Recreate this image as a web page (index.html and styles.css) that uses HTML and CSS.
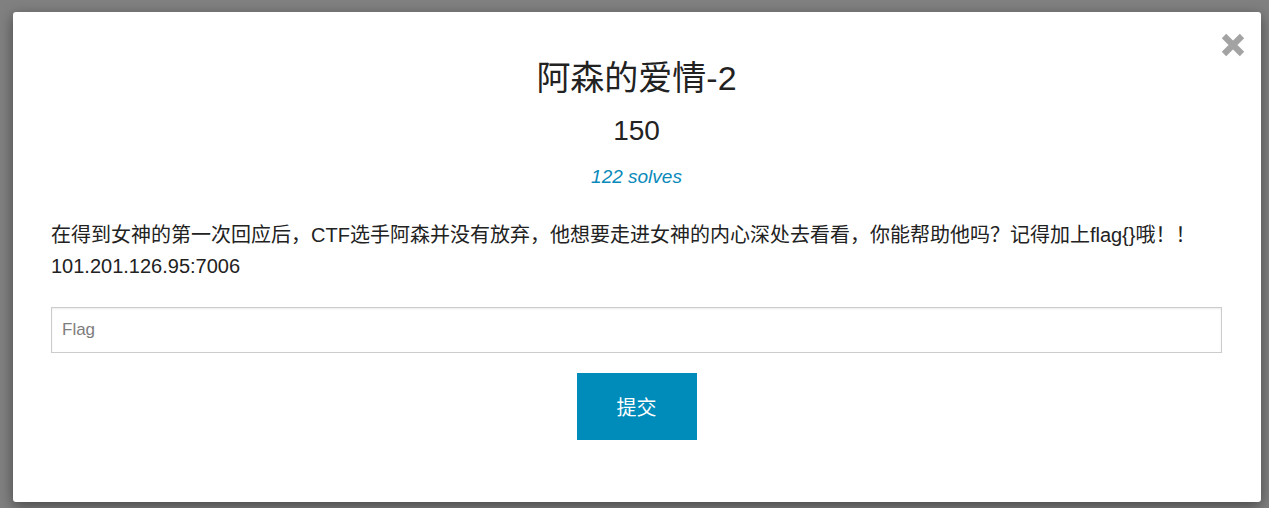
FILE: index.html
```html
<!DOCTYPE html>
<html lang="zh-CN">
<head>
<meta charset="utf-8">
<title>阿森的爱情-2</title>
<link rel="stylesheet" href="styles.css">
</head>
<body>
<div class="modal">
  <button class="close" type="button" aria-label="Close">
    <svg width="24" height="24" viewBox="0 0 24 24"><path d="M3 3 L21 21 M21 3 L3 21" stroke="#a3a3a3" stroke-width="6.2" fill="none"/></svg>
  </button>
  <h2 class="chal-name">阿森的爱情-2</h2>
  <h3 class="chal-value">150</h3>
  <p class="chal-solves">122 solves</p>
  <p class="chal-desc">在得到女神的第一次回应后，CTF选手阿森并没有放弃，他想要走进女神的内心深处去看看，你能帮助他吗？记得加上flag{}哦！！<br>101.201.126.95:7006</p>
  <input class="flag-input" type="text" placeholder="Flag">
  <div class="submit-row"><button class="submit" type="button">提交</button></div>
</div>
</body>
</html>
```
FILE: styles.css
```css
html, body {
  margin: 0;
  padding: 0;
  background: #808080;
  height: 100%;
  overflow: hidden;
}
body {
  padding: 12px 8px 0 13px;
  box-sizing: border-box;
  font-family: "Liberation Sans", "Noto Sans CJK SC", sans-serif;
  color: #333;
}
.modal {
  position: relative;
  background: #fff;
  border-radius: 3px;
  box-shadow: 0 4px 14px rgba(0, 0, 0, 0.45);
  padding: 47px 39px 62px 38px;
  height: 490px;
  box-sizing: border-box;
}
.close {
  position: absolute;
  top: 21px;
  right: 16px;
  width: 24px;
  height: 24px;
  padding: 0;
  border: 0;
  background: none;
  display: block;
}
.close svg { display: block; }
.chal-name {
  margin: 0;
  text-align: center;
  font-size: 34px;
  line-height: 38px;
  font-weight: normal;
  color: #222;
}
.chal-value {
  margin: 17px 0 0;
  text-align: center;
  font-size: 28px;
  line-height: 34px;
  font-weight: normal;
  color: #222;
}
.chal-solves {
  margin: 14.5px 0 0;
  text-align: center;
  font-size: 19px;
  line-height: 28px;
  font-style: italic;
  color: #0a8abb;
}
.chal-desc {
  margin: 29.5px 0 0;
  font-size: 20px;
  line-height: 31px;
  color: #222;
}
.flag-input {
  display: block;
  margin: 24.5px 0 0;
  width: 100%;
  height: 46px;
  box-sizing: border-box;
  border: 1px solid #cccccc;
  box-shadow: inset 0 1px 2px rgba(0, 0, 0, 0.08);
  padding: 0 10px;
  font-family: "Liberation Sans", "Noto Sans CJK SC", sans-serif;
  font-size: 17px;
  color: #333;
  outline: none;
}
.flag-input::placeholder { color: #7d7d7d; }
.submit-row {
  display: flex;
  justify-content: center;
  margin-top: 20px;
}
.submit {
  width: 120px;
  height: 67px;
  border: 0;
  background: #008cba;
  color: #fff;
  font-family: "Liberation Sans", "Noto Sans CJK SC", sans-serif;
  font-size: 20px;
  padding: 0;
}
```
